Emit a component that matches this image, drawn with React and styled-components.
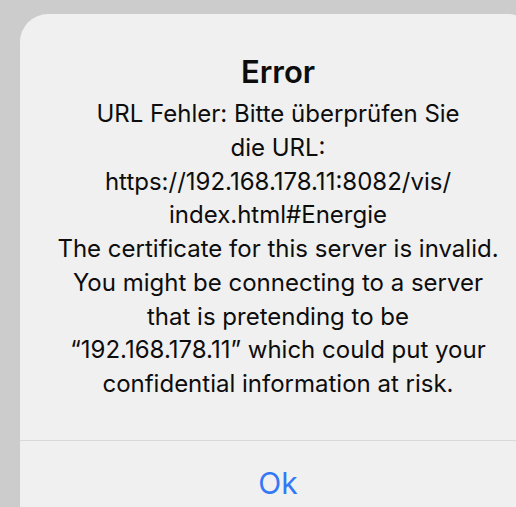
import styled, { createGlobalStyle } from "styled-components";

const GlobalStyle = createGlobalStyle`
  html, body {
    margin: 0;
    padding: 0;
    background: #cccccc;
    overflow: hidden;
  }
  body {
    font-family: Inter, "Noto Sans", "Liberation Sans", sans-serif;
    -webkit-font-smoothing: antialiased;
  }
`;

const Screen = styled.div`
  width: 516px;
  height: 507px;
  padding: 14px 0 0 20px;
  box-sizing: border-box;
  overflow: hidden;
`;

const Alert = styled.div`
  width: 516px;
  height: 520px;
  background: #f0f0f0;
  border-radius: 28px;
  display: flex;
  flex-direction: column;
`;

const Content = styled.div`
  padding: 39px 8px 39px;
  display: flex;
  flex-direction: column;
  align-items: center;
  text-align: center;
  color: #0d0d0d;
`;

const Title = styled.div`
  font-size: 31px;
  line-height: 38px;
  font-weight: 600;
  margin-bottom: 6px;
`;

const Message = styled.div`
  font-size: 24px;
  line-height: 33.75px;
  font-weight: 400;
`;

const Line = styled.div`
  white-space: nowrap;
`;

const Divider = styled.div`
  height: 1px;
  background: #d9d9d9;
`;

const ActionButton = styled.button`
  border: none;
  background: transparent;
  padding: 22px 0 0;
  font-family: inherit;
  font-size: 30px;
  line-height: 40px;
  color: #3478f6;
  text-align: center;
  cursor: pointer;
`;

const lines = [
  "URL Fehler: Bitte überprüfen Sie",
  "die URL:",
  "https://192.168.178.11:8082/vis/",
  "index.html#Energie",
  "The certificate for this server is invalid.",
  "You might be connecting to a server",
  "that is pretending to be",
  "“192.168.178.11” which could put your",
  "confidential information at risk.",
];

export default function App() {
  return (
    <>
      <GlobalStyle />
      <Screen>
        <Alert>
          <Content>
            <Title>Error</Title>
            <Message>
              {lines.map((l) => (
                <Line key={l}>{l}</Line>
              ))}
            </Message>
          </Content>
          <Divider />
          <ActionButton>Ok</ActionButton>
        </Alert>
      </Screen>
    </>
  );
}
